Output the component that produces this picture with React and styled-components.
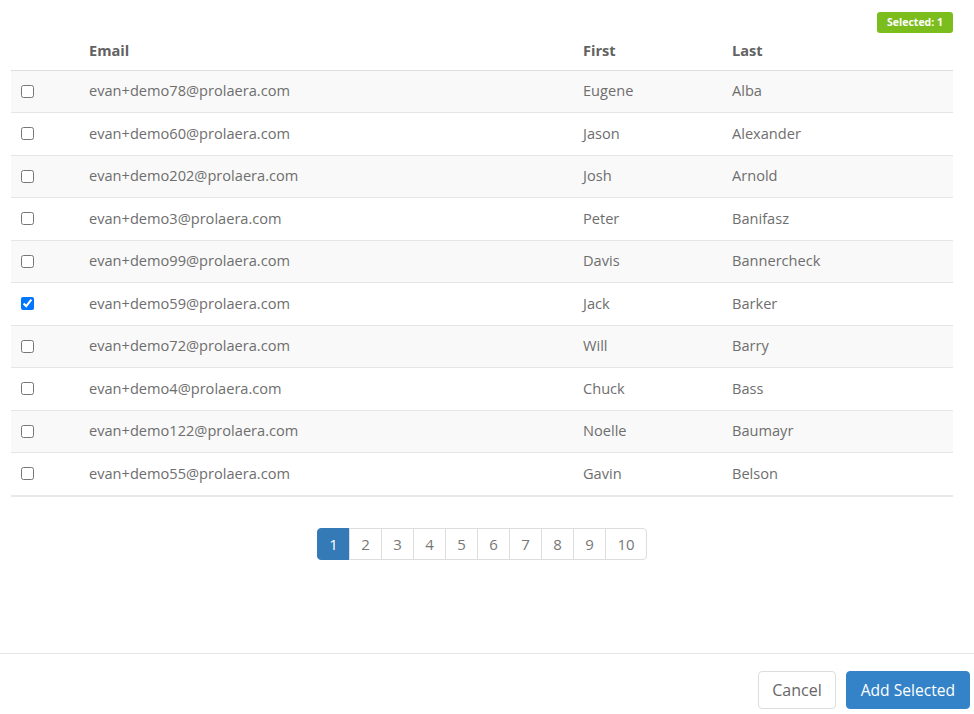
import React, { useState } from "react";
import styled, { createGlobalStyle } from "styled-components";

const GlobalStyle = createGlobalStyle`
  body {
    margin: 0;
    background: #fff;
    font-family: "Open Sans", "Liberation Sans", sans-serif;
  }
`;

const Page = styled.div`
  width: 974px;
  height: 714px;
  display: flex;
  flex-direction: column;
  box-sizing: border-box;
`;

const Body = styled.div`
  flex: 1;
  padding: 12px 21px 0 11px;
  display: flex;
  flex-direction: column;
`;

const BadgeRow = styled.div`
  display: flex;
  justify-content: flex-end;
  height: 21px;
`;

const Badge = styled.span`
  background: #7cbd1e;
  color: #fff;
  font-size: 10.5px;
  font-weight: 700;
  border-radius: 3px;
  padding: 0 10px;
  line-height: 21px;
  height: 21px;
`;

const Table = styled.table`
  width: 100%;
  border-collapse: collapse;
  font-size: 14.6px;
`;

const Th = styled.th`
  text-align: left;
  font-weight: 700;
  color: #626262;
  height: 37px;
  padding: 0 0 2px;
  box-sizing: border-box;
  vertical-align: middle;
  border-bottom: 1px solid #ddd;
  width: ${(p) => p.w || "auto"};
`;

const Tr = styled.tr`
  background: ${(p) => (p.striped ? "#f9f9f9" : "#fff")};
  border-bottom: ${(p) => (p.last ? "2px solid #e6e8eb" : "1px solid #e6e6e6")};
`;

const Td = styled.td`
  height: 39.5px;
  padding: 0 0 2px;
  color: #6e6e6e;
  vertical-align: middle;
`;

const CheckCell = styled(Td)`
  padding: 0 0 0 10px;
  width: 68px;
`;

const Check = styled.input`
  margin: 0;
  width: 13px;
  height: 13px;
  display: block;
`;

const Pager = styled.ul`
  list-style: none;
  display: flex;
  justify-content: center;
  margin: 31px 0 0;
  padding: 0;
`;

const PageItem = styled.li`
  width: ${(p) => (p.wide ? "42px" : "33px")};
  box-sizing: border-box;
  height: 32px;
  display: flex;
  align-items: center;
  justify-content: center;
  font-size: 15px;
  color: ${(p) => (p.active ? "#fff" : "#777")};
  background: ${(p) => (p.active ? "#337ab7" : "#fff")};
  border: 1px solid ${(p) => (p.active ? "#337ab7" : "#ddd")};
  margin-left: -1px;
  &:first-child {
    margin-left: 0;
    border-radius: 4px 0 0 4px;
  }
  &:last-child {
    border-radius: 0 4px 4px 0;
  }
`;

const Footer = styled.div`
  border-top: 1px solid #e5e5e5;
  display: flex;
  justify-content: flex-end;
  gap: 10px;
  padding: 17px 4px 5px 0;
`;

const Button = styled.button`
  height: 38px;
  padding: 0 ${(p) => (p.primary ? "14px" : "13px")};
  font-family: "Open Sans", "Liberation Sans", sans-serif;
  font-size: ${(p) => (p.primary ? "15.6px" : "16px")};
  border-radius: 4px;
  border: 1px solid ${(p) => (p.primary ? "#3483c8" : "#ddd")};
  background: ${(p) => (p.primary ? "#3483c8" : "#fff")};
  color: ${(p) => (p.primary ? "#fff" : "#666")};
`;

const people = [
  ["evan+demo78@prolaera.com", "Eugene", "Alba"],
  ["evan+demo60@prolaera.com", "Jason", "Alexander"],
  ["evan+demo202@prolaera.com", "Josh", "Arnold"],
  ["evan+demo3@prolaera.com", "Peter", "Banifasz"],
  ["evan+demo99@prolaera.com", "Davis", "Bannercheck"],
  ["evan+demo59@prolaera.com", "Jack", "Barker"],
  ["evan+demo72@prolaera.com", "Will", "Barry"],
  ["evan+demo4@prolaera.com", "Chuck", "Bass"],
  ["evan+demo122@prolaera.com", "Noelle", "Baumayr"],
  ["evan+demo55@prolaera.com", "Gavin", "Belson"],
];

export default function App() {
  const [selected, setSelected] = useState([5]);

  const toggle = (i) =>
    setSelected((s) => (s.includes(i) ? s.filter((x) => x !== i) : [...s, i]));

  return (
    <Page>
      <GlobalStyle />
      <Body>
        <BadgeRow>
          <Badge>Selected: {selected.length}</Badge>
        </BadgeRow>
        <Table>
          <thead>
            <tr>
              <Th w="78px"></Th>
              <Th w="494px">Email</Th>
              <Th w="149px">First</Th>
              <Th>Last</Th>
            </tr>
          </thead>
          <tbody>
            {people.map(([email, first, last], i) => (
              <Tr key={email} striped={i % 2 === 0} last={i === people.length - 1}>
                <CheckCell>
                  <Check
                    type="checkbox"
                    checked={selected.includes(i)}
                    onChange={() => toggle(i)}
                  />
                </CheckCell>
                <Td>{email}</Td>
                <Td>{first}</Td>
                <Td>{last}</Td>
              </Tr>
            ))}
          </tbody>
        </Table>
        <Pager>
          {[1, 2, 3, 4, 5, 6, 7, 8, 9, 10].map((n) => (
            <PageItem key={n} active={n === 1} wide={n === 10}>
              {n}
            </PageItem>
          ))}
        </Pager>
      </Body>
      <Footer>
        <Button>Cancel</Button>
        <Button primary>Add Selected</Button>
      </Footer>
    </Page>
  );
}
